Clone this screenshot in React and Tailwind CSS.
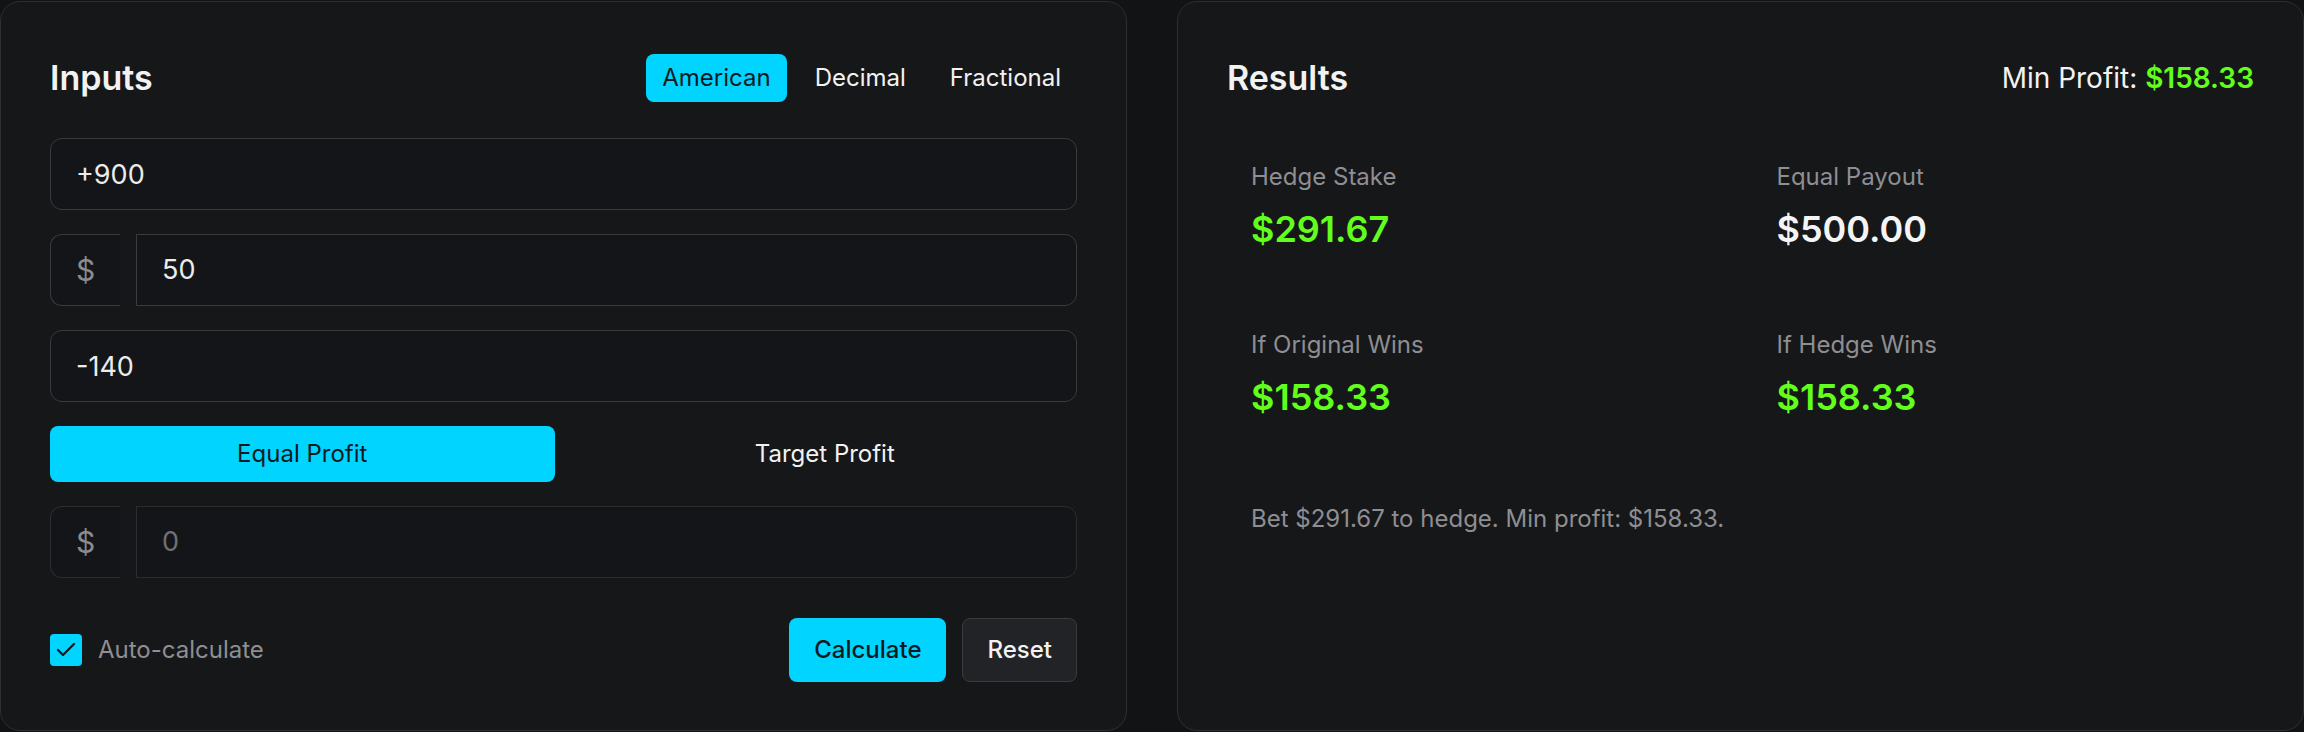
import { Check } from "lucide-react";

function OddsTabs() {
  return (
    <div className="flex items-center gap-3">
      <button className="rounded-lg bg-[#00d4ff] px-4 py-2 text-[24px] leading-8 text-[#0d1a22]">
        American
      </button>
      <button className="rounded-lg px-4 py-2 text-[24px] leading-8 text-[#f2f2f2]">
        Decimal
      </button>
      <button className="rounded-lg px-4 py-2 text-[24px] leading-8 text-[#f2f2f2]">
        Fractional
      </button>
    </div>
  );
}

function MoneyInput({ value, disabled }) {
  return (
    <div className="flex h-[72px] gap-4">
      <div
        className={
          disabled
            ? "flex w-[70px] items-center justify-center rounded-l-xl border border-r-0 border-[#2c2d31] bg-[#141518] text-[30px] text-[#8a8a90]"
            : "flex w-[70px] items-center justify-center rounded-l-xl border border-r-0 border-[#3a3b3f] bg-[#141518] text-[30px] text-[#8a8a90]"
        }
      >
        $
      </div>
      <input
        type="text"
        readOnly
        defaultValue={value}
        className={
          disabled
            ? "flex-1 rounded-r-xl border border-[#2c2d31] bg-[#141518] px-[25px] text-[27px] text-[#6f7075] outline-none"
            : "flex-1 rounded-r-xl border border-[#3a3b3f] bg-[#141518] px-[25px] text-[27px] text-[#ececec] outline-none"
        }
      />
    </div>
  );
}

function Stat({ label, value, green }) {
  return (
    <div className="flex flex-col px-6 py-7">
      <span className="text-[24px] leading-8 text-[#8e8e93]">{label}</span>
      <span
        className={
          green
            ? "mt-4 text-[36px] leading-10 font-semibold text-[#62ff1c]"
            : "mt-4 text-[36px] leading-10 font-semibold text-[#f4f4f4]"
        }
      >
        {value}
      </span>
    </div>
  );
}

export default function App() {
  return (
    <div className="flex h-[732px] w-[2304px] gap-[50px] bg-[#121315] py-px font-[Inter,sans-serif]">
      {/* inputs */}
      <section className="flex w-[1127px] flex-col rounded-[20px] border border-[#2e2f33] bg-[#161719] px-[49px] pt-[52px]">
        <header className="flex h-12 items-center justify-between">
          <h2 className="text-[34px] leading-none font-semibold text-[#f2f2f2]">Inputs</h2>
          <OddsTabs />
        </header>

        <div className="mt-9 flex flex-col gap-6">
          <input
            type="text"
            readOnly
            defaultValue="+900"
            className="h-[72px] rounded-xl border border-[#3a3b3f] bg-[#141518] px-[25px] text-[27px] text-[#ececec] outline-none"
          />
          <MoneyInput value="50" />
          <input
            type="text"
            readOnly
            defaultValue="-140"
            className="h-[72px] rounded-xl border border-[#3a3b3f] bg-[#141518] px-[25px] text-[27px] text-[#ececec] outline-none"
          />
          <div className="grid h-14 grid-cols-2 gap-[18px]">
            <button className="rounded-lg bg-[#00d4ff] text-[24px] text-[#0d1a22]">Equal Profit</button>
            <button className="rounded-lg text-[24px] text-[#f2f2f2]">Target Profit</button>
          </div>
          <MoneyInput value="0" disabled />
        </div>

        <div className="mt-10 flex items-center justify-between">
          <label className="flex items-center gap-4 text-[24px] text-[#8e8e93]">
            <span className="flex h-8 w-8 items-center justify-center rounded bg-[#00d4ff] text-[#0d1a22]">
              <Check size={24} strokeWidth={2.25} />
            </span>
            Auto-calculate
          </label>
          <div className="flex gap-4">
            <button className="rounded-lg bg-[#00d4ff] px-[25px] py-4 text-[24px] leading-8 font-medium text-[#0d1a22]">
              Calculate
            </button>
            <button className="rounded-lg border border-[#3a3b3f] bg-[#222326] px-6 py-[15px] text-[24px] leading-8 font-medium text-[#f2f2f2]">
              Reset
            </button>
          </div>
        </div>
      </section>

      {/* results */}
      <section className="flex w-[1127px] flex-col rounded-[20px] border border-[#2e2f33] bg-[#161719] px-[49px] pt-[52px]">
        <header className="flex h-12 items-center justify-between">
          <h2 className="text-[34px] leading-none font-semibold text-[#f2f2f2]">Results</h2>
          <p className="text-[28px] text-[#f2f2f2]">
            Min Profit: <span className="font-semibold text-[#62ff1c]">$158.33</span>
          </p>
        </header>

        <div className="mt-[31px] grid grid-cols-2 gap-6">
          <Stat label="Hedge Stake" value="$291.67" green />
          <Stat label="Equal Payout" value="$500.00" />
          <Stat label="If Original Wins" value="$158.33" green />
          <Stat label="If Hedge Wins" value="$158.33" green />
        </div>

        <p className="mt-[58px] px-6 text-[24px] leading-8 text-[#8e8e93]">
          Bet $291.67 to hedge. Min profit: $158.33.
        </p>
      </section>
    </div>
  );
}
